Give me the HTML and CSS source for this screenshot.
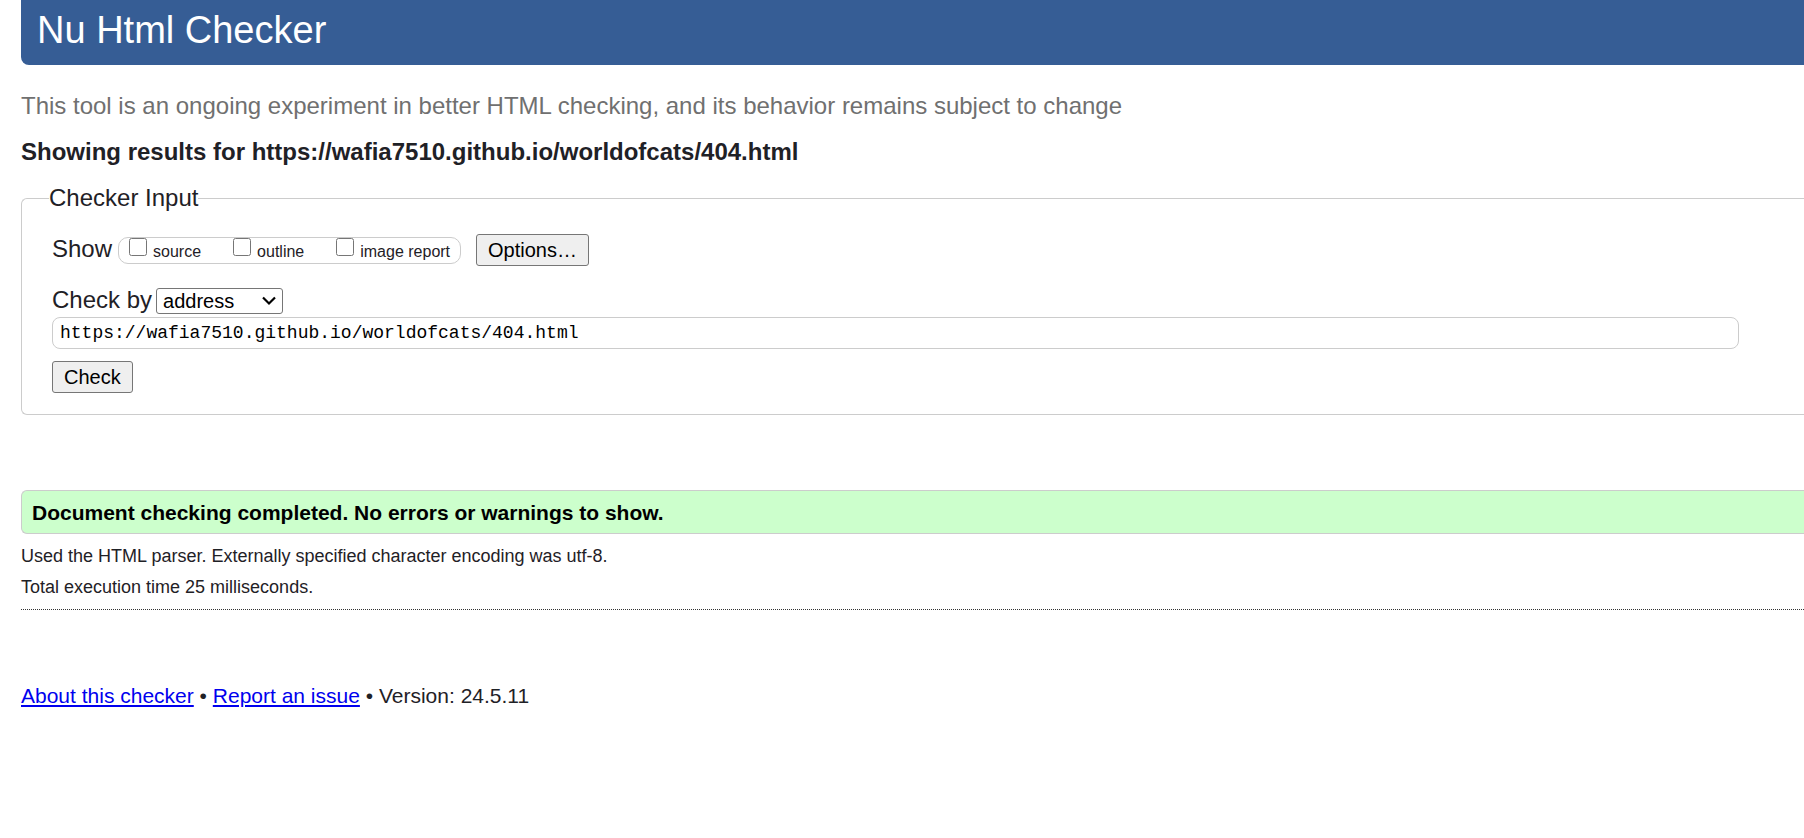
FILE: index.html
```html
<!DOCTYPE html>
<html lang="en">
<head>
<meta charset="utf-8">
<title>Nu Html Checker</title>
<link rel="stylesheet" href="styles.css">
</head>
<body>
<header class="banner"><h1 class="banner-title">Nu Html Checker</h1></header>
<main>
<p class="tagline">This tool is an ongoing experiment in better HTML checking, and its behavior remains subject to change</p>
<h2 class="heading">Showing results for https://wafia7510.github.io/worldofcats/404.html</h2>
<form>
<fieldset class="checker">
<legend class="legend">Checker Input</legend>
<div class="row show-row">
<span>Show</span>
<div class="extras">
<label class="extra"><input class="tick" type="checkbox">source</label>
<label class="extra"><input class="tick" type="checkbox">outline</label>
<label class="extra"><input class="tick" type="checkbox">image report</label>
</div>
<button class="button" type="button">Options…</button>
</div>
<div class="row">
<label for="method">Check by</label>
<select class="method" id="method"><option>address</option><option>file upload</option><option>text input</option></select>
</div>
<input class="address" type="url" aria-label="Address" spellcheck="false" value="https://wafia7510.github.io/worldofcats/404.html">
<button class="button" type="button">Check</button>
</fieldset>
</form>
<p class="success">Document checking completed. No errors or warnings to show.</p>
<div class="details">
<p class="detail">Used the HTML parser. Externally specified character encoding was utf-8.</p>
<p class="detail">Total execution time 25 milliseconds.</p>
</div>
</main>
<footer class="footer"><a href="#about">About this checker</a> • <a href="#issue">Report an issue</a> • Version: 24.5.11</footer>
</body>
</html>
```
FILE: styles.css
```css
* { box-sizing: border-box; }
body {
  margin: 0;
  padding-left: 21px;
  background: #fff;
  color: #1f2126;
  font: 24px/28px "Liberation Sans", Arial, sans-serif;
}
h1, h2, p { margin: 0; }
.banner {
  padding: 8px 16px 13px;
  background: #365d95;
  color: #fff;
  border-bottom-left-radius: 8px;
}
.banner-title { font-size: 38px; font-weight: 400; line-height: 44px; }
.tagline { margin-top: 27px; color: #707070; }
.heading { margin-top: 18px; font-size: 24px; font-weight: 700; }
.checker {
  margin: 18px 0 0;
  padding: 22px 65px 21px 30px;
  border: 1px solid #ccc;
  border-right: 0;
  border-radius: 6px 0 0 6px;
}
.legend { margin-left: -3px; padding: 0; }
.row { display: flex; align-items: baseline; gap: 4px; }
.show-row { gap: 6px; margin-bottom: 20px; }
.extras {
  display: flex;
  gap: 32px;
  height: 27px;
  margin-right: 9px;
  padding: 0 10px;
  border: 1px solid #ccc;
  border-radius: 10px;
  font-size: 16px;
}
.extra { display: flex; gap: 6px; align-items: baseline; line-height: 27px; }
.tick { align-self: flex-start; width: 18px; height: 18px; margin: 0; }
.button {
  display: block;
  height: 32px;
  padding: 0 11px;
  border: 1px solid #767676;
  border-radius: 3px;
  background: #efefef;
  color: #000;
  font: 20px/28px "Liberation Sans", Arial, sans-serif;
}
.method {
  appearance: none;
  width: 127px;
  height: 26px;
  padding: 0 6px;
  border: 1px solid #767676;
  border-radius: 3px;
  background: #fff url("data:image/svg+xml,%3Csvg xmlns='http://www.w3.org/2000/svg' width='14' height='10'%3E%3Cpath d='M1 1.5l6 6 6-6' fill='none' stroke='%23000' stroke-width='2.2'/%3E%3C/svg%3E") no-repeat right 6px center;
  color: #000;
  font: 20px "Liberation Sans", Arial, sans-serif;
}
.address {
  display: block;
  width: 100%;
  height: 32px;
  margin: 3px 0 12px;
  padding: 0 7px;
  border: 1px solid #ccc;
  border-radius: 8px;
  color: #000;
  font: 18px Consolas, "Liberation Mono", monospace;
}
.success {
  margin-top: 75px;
  padding: 8px 10px 6px;
  border: 1px solid #ccc;
  border-right: 0;
  border-radius: 6px 0 0 6px;
  background: #cfc;
  color: #000;
  font-size: 21px;
  font-weight: 700;
}
.details { padding: 7px 0 6px; border-bottom: 1px dotted #333; font-size: 18px; }
.detail { line-height: 31px; }
.footer { margin-top: 72px; font-size: 21px; }
.footer a { color: #00e; }
```
